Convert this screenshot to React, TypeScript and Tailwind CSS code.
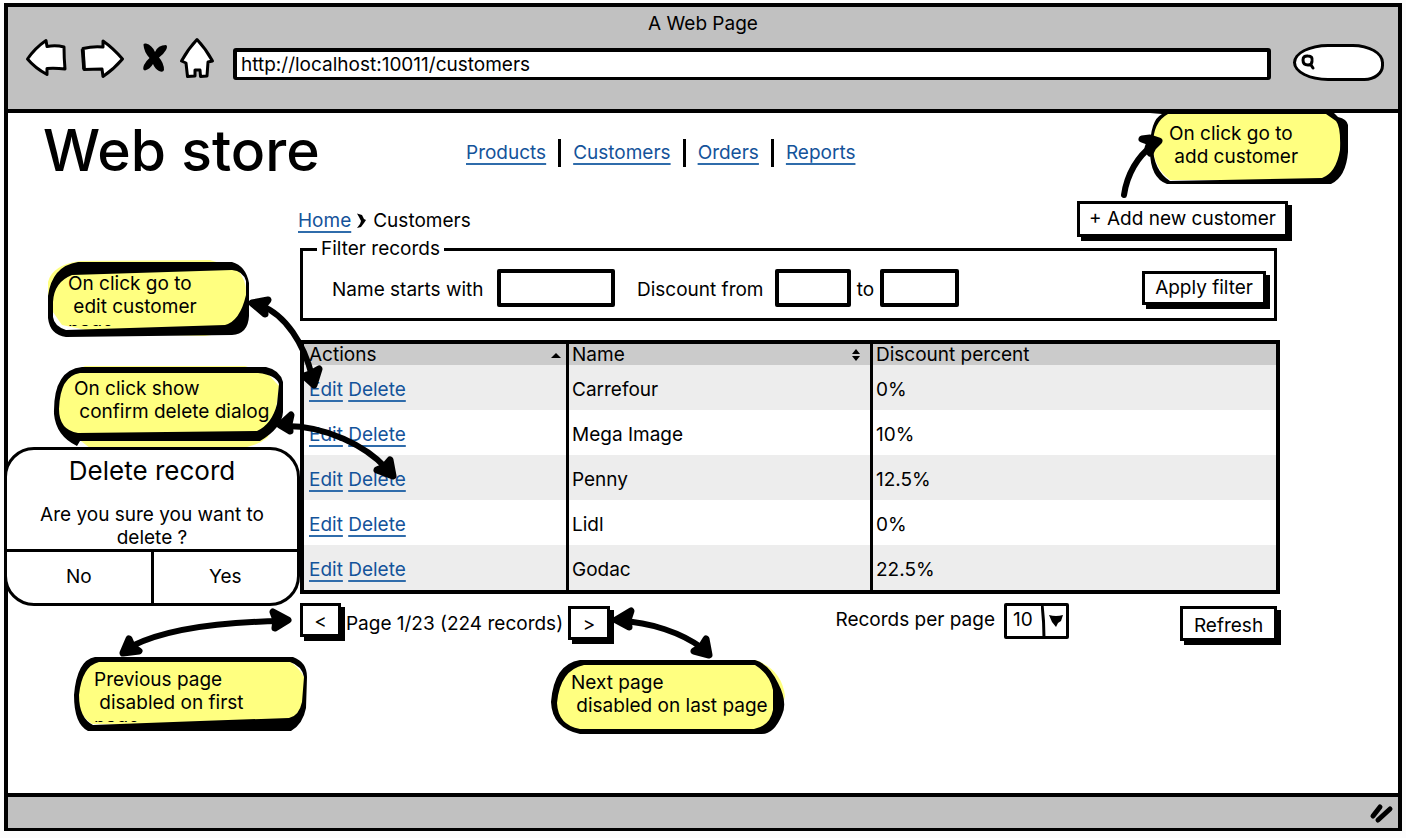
import type { ReactNode } from "react";

const customers = [
  { name: "Carrefour", discount: "0%" },
  { name: "Mega Image", discount: "10%" },
  { name: "Penny", discount: "12.5%" },
  { name: "Lidl", discount: "0%" },
  { name: "Godac", discount: "22.5%" },
];

const navLinks = ["Products", "Customers", "Orders", "Reports"];

const linkClass =
  "text-[#14539a] underline decoration-[#2f6cab] decoration-2 underline-offset-4";

function SketchButton({ children, className }: { children: ReactNode; className: string }) {
  return (
    <button
      type="button"
      className={`shrink-0 border-[3px] border-black bg-white whitespace-nowrap shadow-[4px_4px_0_0_#000] ${className}`}
    >
      {children}
    </button>
  );
}

function BackIcon() {
  return (
    <svg width="42" height="40" viewBox="25 37 42 40" fill="#fff" stroke="#000" strokeWidth="3" strokeLinejoin="round" aria-hidden="true">
      <path d="M27.500 58 Q35 47 46 39.500 L47 45.500 Q56 44 64 46 Q64 57 65 68 Q56 67 47 67.500 L47 73.500 Q35 67 27.500 58Z" />
    </svg>
  );
}

function ForwardIcon() {
  return (
    <svg width="44" height="41" viewBox="80 37 44 41" fill="#fff" stroke="#000" strokeWidth="3" strokeLinejoin="round" aria-hidden="true">
      <path d="M83 47.500 Q93 45 103 46 L103 40 Q113 47 122.500 58 Q114 68 103 75.500 L102 68 Q92 68 84 68.500 Q84 58 83 47.500Z" />
      <path d="M82.500 48 L84 68" strokeWidth="3.500" />
    </svg>
  );
}

function StopIcon() {
  return (
    <svg width="26" height="32" viewBox="142 40 26 32" aria-hidden="true">
      <path d="M143.500 43 Q143 41 146 41.500 Q152 43 155 50 Q158 43 166 43 Q168 44 166 48 Q163 53 159 55.500 Q164 61 164 68 Q163 71 159 69 Q155 67 153 62 Q150 67 145 68.500 Q142 68 144 63 Q146 59 149.500 56 Q144 50 143.500 43Z" />
    </svg>
  );
}

function HomeIcon() {
  return (
    <svg width="36" height="42" viewBox="179 36 36 42" fill="#fff" stroke="#000" strokeWidth="3" strokeLinejoin="round" aria-hidden="true">
      <path d="M197 38.500 Q206 48 212.500 60 L208 61 L207 75 L200.500 75.500 L200 69 L195 69 L195 75 L187.500 75.500 L186 62 L181.500 60 Q188 48 197 38.500Z" />
    </svg>
  );
}

function SortIcon({ both }: { both?: boolean }) {
  return (
    <svg width="12" height="14" viewBox="0 0 12 14" aria-hidden="true">
      {both ? (
        <path d="M6 1 L10 6 H2Z M2 8 H10 L6 13Z" />
      ) : (
        <path d="M6 5 L11 10 H1Z" />
      )}
    </svg>
  );
}

type CalloutProps = {
  className: string;
  viewBox: string;
  paper: string;
  ink: string;
  lines: string;
  textClass: string;
};

function Callout({ className, viewBox, paper, ink, lines, textClass }: CalloutProps) {
  return (
    <div className={`absolute ${className}`}>
      <svg className="absolute inset-0 size-full" viewBox={viewBox} aria-hidden="true">
        <path d={paper} fill="#ffff80" />
        <path d={ink} fill="#000" fillRule="evenodd" />
      </svg>
      <p className={`relative overflow-hidden leading-[23px] whitespace-pre ${textClass}`}>{lines}</p>
    </div>
  );
}

function Arrow({ className, viewBox, line, heads }: { className: string; viewBox: string; line: string; heads: string }) {
  return (
    <svg className={`pointer-events-none absolute ${className}`} viewBox={viewBox} fill="none" stroke="#000" aria-hidden="true">
      <path d={line} strokeWidth="6" strokeLinecap="round" />
      <path d={heads} fill="#000" strokeWidth="7" strokeLinejoin="round" />
    </svg>
  );
}

function DeleteDialog() {
  return (
    <section
      role="dialog"
      aria-labelledby="delete-title"
      className="absolute top-[334px] -left-1 flex h-[159px] w-[296px] flex-col overflow-hidden rounded-[30px] border-[3px] border-black bg-white text-center"
    >
      <div className="flex-1">
        <h2 id="delete-title" className="pt-1 text-[26px] leading-[34px]">
          Delete record
        </h2>
        <p className="px-6 pt-[15px] leading-[23px]">Are you sure you want to delete ?</p>
      </div>
      <div className="flex h-[56px] shrink-0 border-t-[3px] border-black">
        <button type="button" className="flex-1 border-r-[3px] border-black pb-1">
          No
        </button>
        <button type="button" className="flex-1 pb-1">
          Yes
        </button>
      </div>
    </section>
  );
}

export default function App() {
  return (
    <div className="flex min-h-screen bg-[#fcfcfc] pt-[3px] pr-1 pb-[7px] pl-1 font-['Inter',sans-serif] text-[19px] leading-6 text-black">
      <div className="flex min-w-0 flex-1 flex-col border-4 border-b-[3px] border-black bg-white">
        <header className="border-b-4 border-black bg-[#c1c1c1] pb-6">
          <div className="pt-[3px] pb-px text-center leading-7">A Web Page</div>
          <div className="flex h-[46px] items-center pr-[14px] pl-[17px]">
            <button type="button" aria-label="Back" className="mr-[13px] pb-2">
              <BackIcon />
            </button>
            <button type="button" aria-label="Forward" className="mr-[18px] pb-2">
              <ForwardIcon />
            </button>
            <button type="button" aria-label="Stop" className="mr-[11px] pb-2">
              <StopIcon />
            </button>
            <button type="button" aria-label="Home" className="mr-[18px] pb-2">
              <HomeIcon />
            </button>
            <input
              aria-label="Address"
              defaultValue="http://localhost:10011/customers"
              className="mt-1 h-8 min-w-0 flex-1 rounded-[3px] border-4 border-b-[3px] border-black bg-white px-1 outline-none"
            />
            <div className="ml-[22px] flex h-[37px] w-[91px] shrink-0 items-center rounded-[36px_32px_20px_36px/19px_19px_16px_19px] border-[3px] border-black bg-white pl-1">
              <svg width="16" height="18" viewBox="0 0 16 18" fill="none" stroke="#000" strokeWidth="3" strokeLinecap="round" aria-hidden="true">
                <path d="M12 8 Q12 12 8 12 Q3 12 3 7 Q3 2.500 8 3 Q13 3 12 8 L11 12 L13 15" />
              </svg>
              <input aria-label="Search" className="w-14 min-w-0 bg-transparent outline-none" />
            </div>
          </div>
        </header>

        <main className="relative flex-1">
          <div className="flex items-start pl-[35px]">
            <h1 className="w-[423px] shrink-0 text-[57px] leading-[76px] font-medium whitespace-nowrap">Web store</h1>
            <nav className="flex items-center pt-[26px]">
              {navLinks.map((link, i) => (
                <span key={link} className="flex items-center">
                  {i > 0 && <span className="mx-3 h-7 w-[3px] bg-black" />}
                  <a href="#" className={linkClass}>
                    {link}
                  </a>
                </span>
              ))}
            </nav>
          </div>

          <div className="flex items-center justify-between pt-3 pr-[110px] pl-[290px]">
            <div className="flex items-center gap-[6px] pt-[3px]">
              <a href="#" className={linkClass}>
                Home
              </a>
              <svg width="10" height="18" viewBox="1 0 10 18" aria-hidden="true">
                <path d="M1 1.500 L6 3 L8 7 L10 8 L8 11 L5 15 L1 16 L4 12 L5 9 L3 5Z" />
              </svg>
              <span>Customers</span>
            </div>
            <SketchButton className="h-9 px-[9px]">+ Add new customer</SketchButton>
          </div>

          <div className="pr-[118px] pl-[292px]">
            <form>
              <fieldset className="mr-[3px] border-[3px] border-black">
                <legend className="ml-[14px] px-1">Filter records</legend>
                <div className="flex h-[57px] items-center pr-2 pb-1 pl-[29px]">
                  <label htmlFor="name" className="w-[165px] shrink-0 pt-1">
                    Name starts with
                  </label>
                  <input id="name" className="h-[38px] w-[118px] min-w-0 rounded-[2px] border-4 border-black outline-none" />
                  <label htmlFor="from" className="w-[160px] shrink-0 pt-1 pl-[22px]">
                    Discount from
                  </label>
                  <input id="from" className="h-[38px] w-[76px] min-w-0 rounded-[2px] border-4 border-black outline-none" />
                  <label htmlFor="to" className="w-[29px] shrink-0 pt-1 text-center">
                    to
                  </label>
                  <input id="to" className="h-[38px] w-[79px] min-w-0 rounded-[2px] border-4 border-black outline-none" />
                  <SketchButton className="ml-auto h-[34px] px-[10px]">Apply filter</SketchButton>
                </div>
              </fieldset>
            </form>

            <table className="mt-[19px] w-full table-fixed border-separate border-spacing-0 border-4 border-black text-left">
              <colgroup>
                <col className="w-[265px]" />
                <col className="w-[304px]" />
                <col />
              </colgroup>
              <thead>
                <tr className="h-[21px] bg-[#cbcbcb] leading-5">
                  <th className="border-r-[3px] border-black p-0 pt-px pl-[5px] font-normal">
                    <span className="flex items-center justify-between pr-1">
                      Actions <SortIcon />
                    </span>
                  </th>
                  <th className="border-r-[3px] border-black p-0 pt-px pl-[3px] font-normal">
                    <span className="flex items-center justify-between pr-2">
                      Name <SortIcon both />
                    </span>
                  </th>
                  <th className="p-0 pt-px pl-[3px] font-normal">Discount percent</th>
                </tr>
              </thead>
              <tbody>
                {customers.map((c) => (
                  <tr key={c.name} className="h-[45px] odd:bg-[#ededed]">
                    <td className="border-r-[3px] border-black p-0 pt-1 pl-[5px]">
                      <a href="#" className={linkClass}>
                        Edit
                      </a>{" "}
                      <a href="#" className={linkClass}>
                        Delete
                      </a>
                    </td>
                    <td className="border-r-[3px] border-black p-0 pt-1 pl-[3px]">{c.name}</td>
                    <td className="p-0 pt-1 pl-[3px]">{c.discount}</td>
                  </tr>
                ))}
              </tbody>
            </table>

            <div className="flex items-start pt-[9px] pr-[3px]">
              <SketchButton className="h-[34px] w-[41px] pt-1">&lt;</SketchButton>
              <span className="w-[227px] shrink-0 pt-[9px] text-center whitespace-nowrap">Page 1/23 (224 records)</span>
              <SketchButton className="mt-[3px] h-[34px] w-[42px] pt-1">&gt;</SketchButton>
              <label htmlFor="page-size" className="mr-[9px] ml-auto pt-[5px]">
                Records per page
              </label>
              <div className="relative mr-[111px]">
                <select
                  id="page-size"
                  defaultValue="10"
                  className="h-9 w-[65px] appearance-none rounded-[2px] border-[3px] border-black bg-white pb-[2px] pl-[6px]"
                >
                  <option>10</option>
                  <option>25</option>
                  <option>50</option>
                </select>
                <svg className="pointer-events-none absolute top-0 right-0" width="28" height="36" viewBox="0 0 28 36" aria-hidden="true">
                  <path d="M1 1 Q3 18 3 35" fill="none" stroke="#000" strokeWidth="3" />
                  <path d="M8 12 Q15 14 22 12 L20 18 L17 20 L15 24 L11 19Z" />
                </svg>
              </div>
              <SketchButton className="mt-[3px] h-[35px] w-[97px] pt-1">Refresh</SketchButton>
            </div>
          </div>

          <Callout
            className="-top-[3px] right-[49px] h-[76px] w-[200px]"
            viewBox="1149 110 200 76"
            paper="M1172 113 H1325 Q1336 115 1342 125 V150 Q1336 172 1325 180 H1170 Q1150 165 1153 135 Q1156 114 1172 113Z"
            ink="M1150 113 H1334 L1338 117 Q1347 119 1348 125 V152 Q1346 177 1331 184 H1167 Q1150 178 1150 150 Q1150 120 1162 114Z M1168 114 Q1153 122 1153 145 Q1153 170 1170 181 L1322 178 Q1336 173 1340 150 Q1341 127 1336 121 L1326 114Z"
            lines={"On click go to\n add customer"}
            textClass="pt-3 pl-5"
          />
          <Callout
            className="top-[147px] left-[38px] h-[78px] w-[205px]"
            viewBox="46 260 205 78"
            paper="M80 261 L210 260 L236 268 Q247 280 246 294 V315 Q240 332 205 336 L100 333 L62 325 L48 305 V282 Q52 265 80 261Z"
            ink="M78 262 L232 262 Q246 266 249 283 V316 Q248 334 232 335 L66 337 Q50 335 48 318 V296 Q52 266 78 262Z M72 275 Q54 282 53 302 V317 Q54 326 66 330 L225 325 Q240 321 246 295 V281 Q243 271 232 270Z"
            lines={"On click go to\n edit customer\npage"}
            textClass="mt-3 ml-[22px] h-[54px]"
          />
          <Callout
            className="top-[252px] left-[44px] h-[84px] w-[234px]"
            viewBox="52 365 234 84"
            paper="M85 366 H245 L268 374 L279 386 Q277 412 268 437 Q258 446 240 448 H90 L60 425 Q53 390 70 373Z"
            ink="M82 367 H266 Q280 370 283 382 V412 Q282 428 260 441 H80 L77 446 Q56 436 54 414 Q53 370 82 367Z M80 373 H258 Q276 375 279 384 L277 404 Q272 424 257 431 L78 433 Q59 430 59 409 Q60 376 80 373Z"
            lines={"On click show\n confirm delete dialog"}
            textClass="pt-3 pl-[22px]"
          />
          <Callout
            className="top-[542px] left-[64px] h-[78px] w-[238px]"
            viewBox="72 655 238 78"
            paper="M100 659 H286 Q298 666 304 677 V700 Q300 720 288 727 L92 724 Q78 714 78 700 Q80 666 100 659Z"
            ink="M95 657 H293 Q307 662 307 677 L306 708 Q303 724 291 731 H88 Q74 724 74 695 Q77 660 95 657Z M99 662 H290 Q302 666 304 677 L302 702 Q299 716 289 718 L200 721 L93 725 Q79 718 79 695 Q82 666 99 662Z"
            lines={"Previous page\n disabled on first\npage"}
            textClass="mt-[13px] ml-[22px] h-[54px]"
          />
          <Callout
            className="top-[545px] left-[541px] h-[78px] w-[237px]"
            viewBox="549 658 237 78"
            paper="M580 660 H756 Q782 670 785 696 Q780 722 764 732 H580 Q551 722 554 698 Q558 665 580 660Z"
            ink="M580 660 H755 Q769 664 778 683 Q788 702 782 715 Q774 734 762 734 H580 Q552 728 551 702 Q554 664 580 660Z M584 665 H755 Q770 674 773 690 V710 Q770 726 754 729 H580 Q558 725 557 703 Q560 670 584 665Z"
            lines={"Next page\n disabled on last page"}
            textClass="pt-[13px] pl-[22px]"
          />

          <DeleteDialog />

          <Arrow
            className="top-[17px] right-[228px] h-[76px] w-[56px]"
            viewBox="1114 130 56 76"
            line="M1124 195 C1127 174 1138 156 1152 146"
            heads="M1142 139 L1150 138 L1159 141 L1153 147 L1150 153 L1148 148 L1150 142Z"
          />
          <Arrow
            className="top-[177px] left-[232px] h-[110px] w-[100px]"
            viewBox="240 290 100 110"
            line="M260 305 C286 315 304 344 312 376"
            heads="M252 303 L268 300 L264 305 L265 314Z M314 385 L304 376 L310 374 L319 369Z"
          />
          <Arrow
            className="top-[287px] left-[262px] h-[90px] w-[140px]"
            viewBox="270 400 140 90"
            line="M286 426 C326 426 366 446 386 468"
            heads="M280 425 L291 415 L289 424 L290 431Z M393 476 L377 470 L384 467 L390 460Z"
          />
          <Arrow
            className="top-[482px] left-[102px] h-[70px] w-[200px]"
            viewBox="110 595 200 70"
            line="M132 646 C164 630 218 622 282 621"
            heads="M123 653 L129 639 L132 646 L139 651Z M288 620 L273 612 L276 620 L275 628Z"
          />
          <Arrow
            className="top-[487px] left-[597px] h-[65px] w-[115px]"
            viewBox="605 600 115 65"
            line="M620 621 C650 622 682 633 702 648"
            heads="M616 620 L631 611 L628 620 L629 627Z M709 655 L694 651 L701 647 L706 639Z"
          />
        </main>

        <footer className="flex h-[35px] items-center justify-end border-t-4 border-black bg-[#c1c1c1] pr-1">
          <svg width="25" height="22" viewBox="0 0 25 22" stroke="#000" strokeWidth="5" strokeLinecap="round" aria-hidden="true">
            <path d="M4 14 L11 5 M9 18 L21 7" />
          </svg>
        </footer>
      </div>
    </div>
  );
}
